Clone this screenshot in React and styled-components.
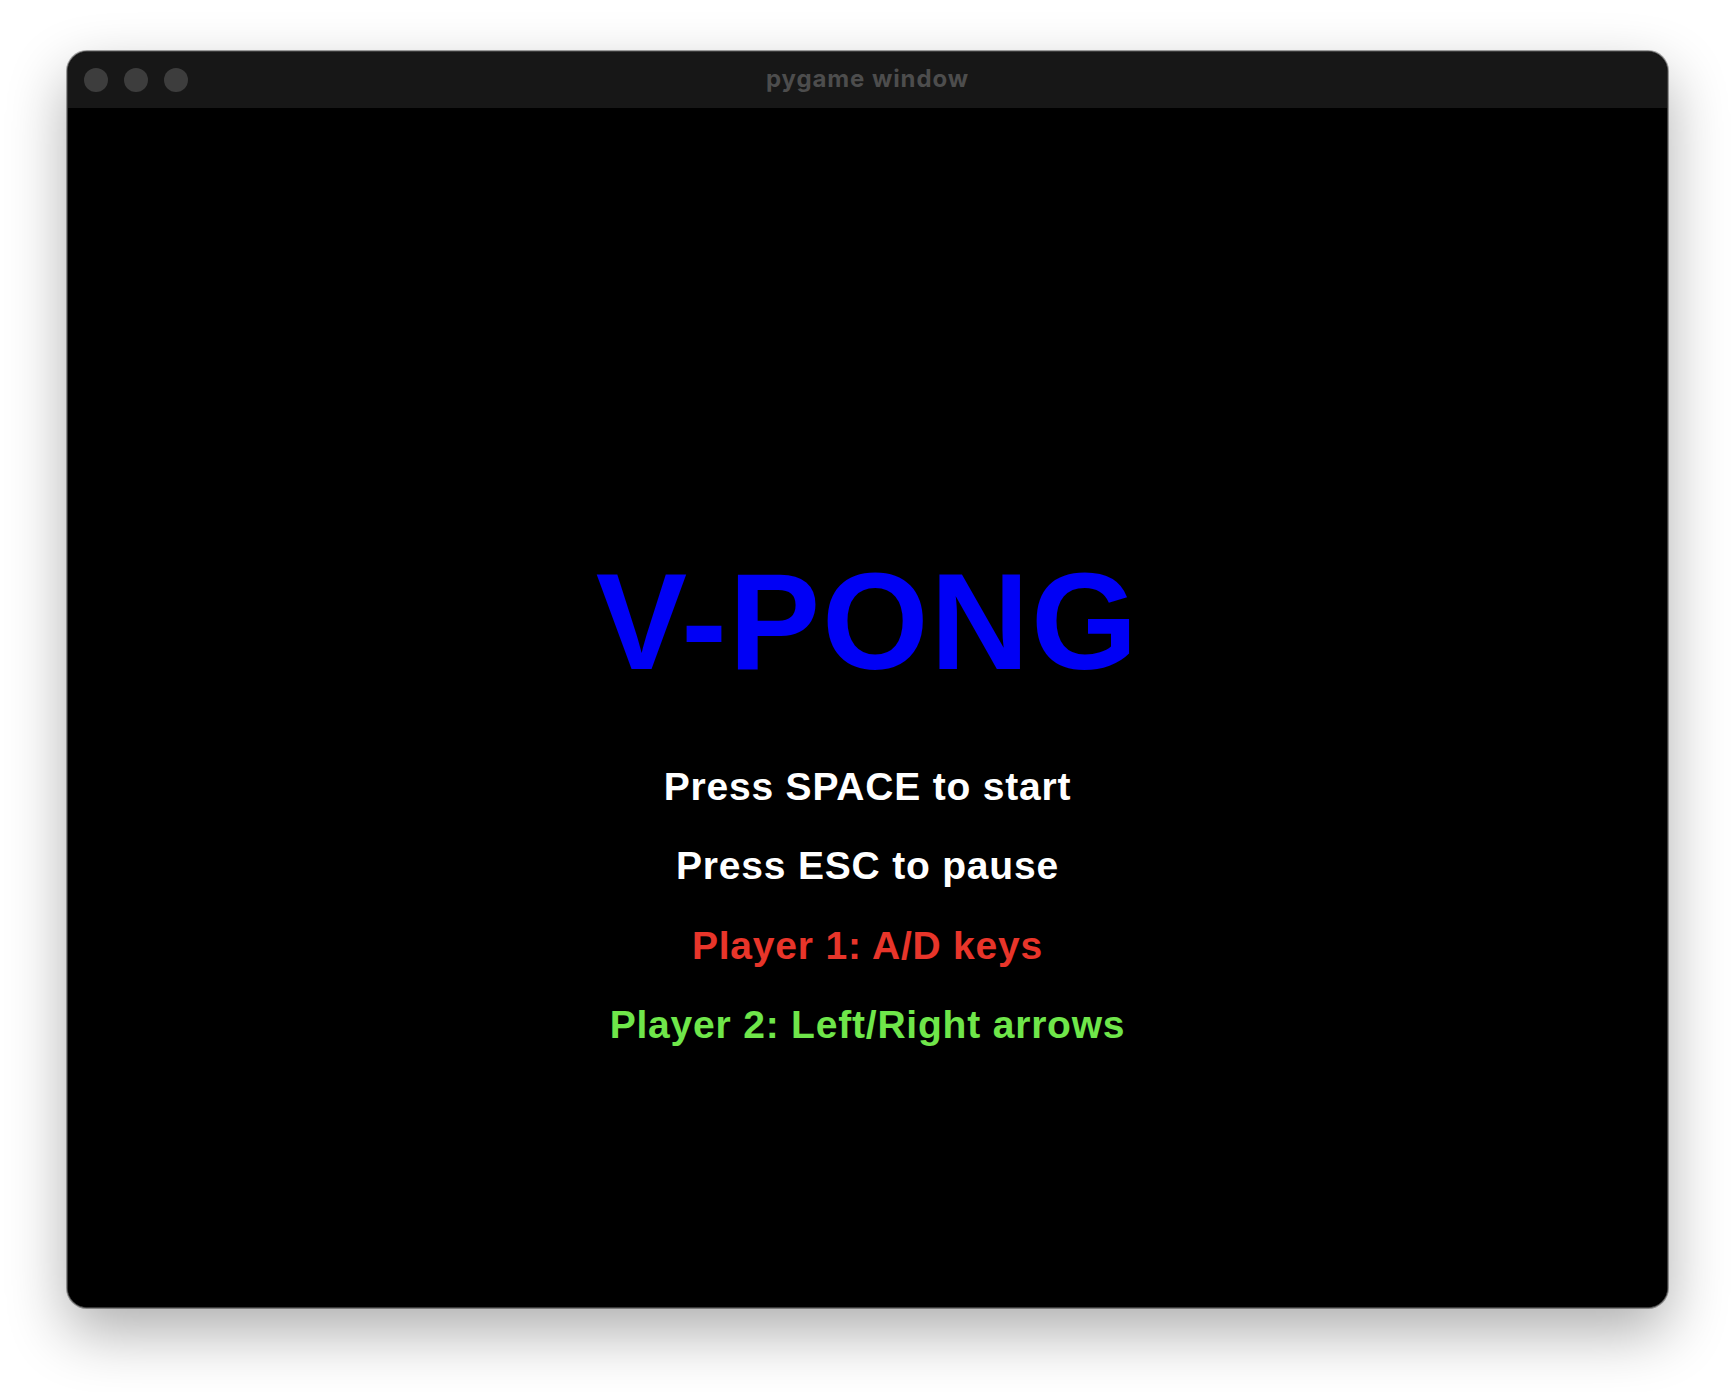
import React from 'react';
import styled, { createGlobalStyle } from 'styled-components';

const GlobalStyle = createGlobalStyle`
  html, body {
    margin: 0;
    padding: 0;
    background: #ffffff;
  }
  body {
    font-family: 'Liberation Sans', Arial, sans-serif;
  }
`;

const Desktop = styled.div`
  width: 1736px;
  height: 1392px;
  padding: 51px 0 0 67px;
  box-sizing: border-box;
  background: #ffffff;
  overflow: hidden;
`;

const Window = styled.div`
  width: 1601px;
  height: 1257px;
  box-sizing: border-box;
  display: flex;
  flex-direction: column;
  border: 1px solid #3a3a3a;
  border-radius: 20px;
  overflow: hidden;
  background: #000000;
  box-shadow: 0 24px 60px rgba(0, 0, 0, 0.32), 0 0 0 1px rgba(0, 0, 0, 0.35);
`;

const TitleBar = styled.div`
  position: relative;
  height: 56px;
  flex: none;
  display: flex;
  align-items: center;
  justify-content: center;
  background: #171717;
`;

const Lights = styled.div`
  position: absolute;
  left: 16px;
  top: 16px;
  display: flex;
  gap: 16px;
`;

const Light = styled.span`
  width: 24px;
  height: 24px;
  border-radius: 50%;
  background: #3d3d3d;
`;

const Title = styled.div`
  font-family: Inter, 'Liberation Sans', sans-serif;
  font-weight: 700;
  font-size: 24px;
  letter-spacing: 0.9px;
  color: #4d4d4d;
  margin-top: -3px;
`;

const Screen = styled.div`
  flex: 1;
  display: flex;
  flex-direction: column;
  align-items: center;
  padding-top: 444px;
  background: #000000;
`;

const Logo = styled.h1`
  margin: 0 0 55px;
  font-family: 'Liberation Sans', Arial, sans-serif;
  font-weight: 700;
  font-size: 137px;
  letter-spacing: 1.8px;
  line-height: 140px;
  color: #0000f5;
`;

const Line = styled.div`
  font-family: 'Liberation Sans', Arial, sans-serif;
  font-weight: 700;
  font-size: 39px;
  letter-spacing: 0.8px;
  line-height: 79.3px;
  color: ${(p) => p.$color || '#ffffff'};
`;

const lines = [
  { text: 'Press SPACE to start', color: '#ffffff' },
  { text: 'Press ESC to pause', color: '#ffffff' },
  { text: 'Player 1: A/D keys', color: '#e8352a' },
  { text: 'Player 2: Left/Right arrows', color: '#6fe64a' },
];

export default function App() {
  return (
    <>
      <GlobalStyle />
      <Desktop>
        <Window>
          <TitleBar>
            <Lights>
              <Light />
              <Light />
              <Light />
            </Lights>
            <Title>pygame window</Title>
          </TitleBar>
          <Screen>
            <Logo>V-PONG</Logo>
            {lines.map((l) => (
              <Line key={l.text} $color={l.color}>
                {l.text}
              </Line>
            ))}
          </Screen>
        </Window>
      </Desktop>
    </>
  );
}
